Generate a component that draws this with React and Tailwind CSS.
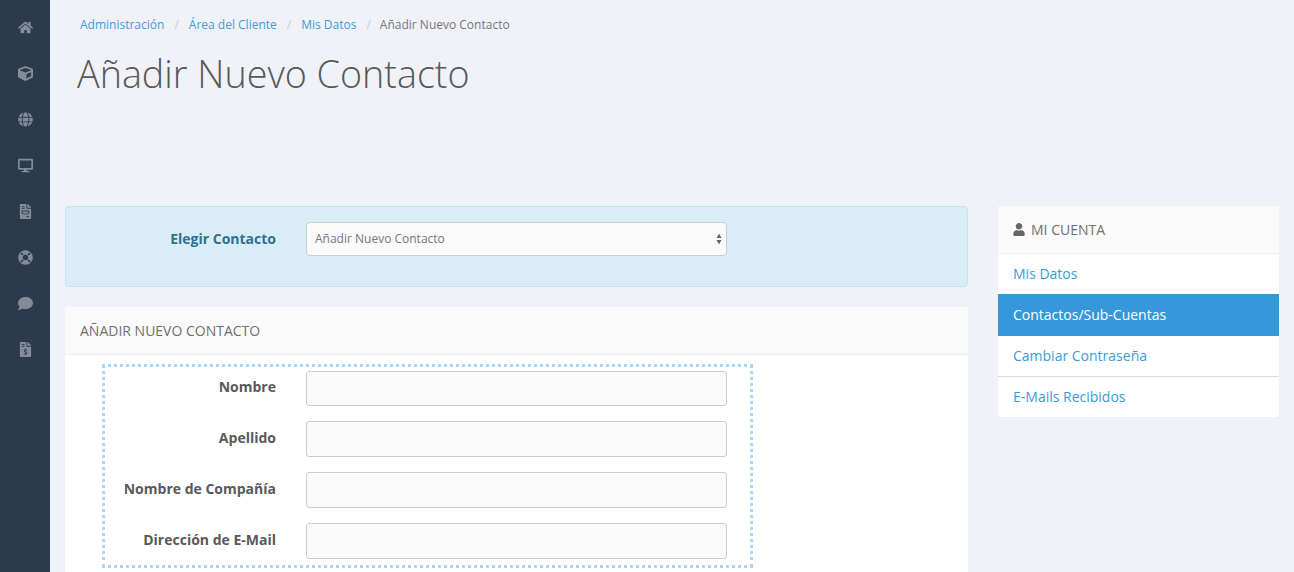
import React from "react";
import { FaHome, FaCube, FaGlobe, FaDesktop, FaFileInvoice, FaLifeRing, FaComment, FaFileInvoiceDollar, FaUser } from "react-icons/fa";

const nav = [FaHome, FaCube, FaGlobe, FaDesktop, FaFileInvoice, FaLifeRing, FaComment, FaFileInvoiceDollar];
const fields = ["Nombre", "Apellido", "Nombre de Compañía", "Dirección de E-Mail"];

export default function App() {
  return (
    <div className="flex h-[572px] w-[1294px] overflow-hidden bg-[#f0f2f7] font-['Open_Sans',sans-serif] text-[#58595b]">
      <aside className="flex w-[50px] shrink-0 flex-col items-center bg-[#2b3a4d] pt-[19px]">
        {nav.map((I, i) => (
          <div key={i} className="flex h-[46px] w-full items-start justify-center pt-px">
            <I className="h-[15px] w-[15px] text-[#848c99]" />
          </div>
        ))}
      </aside>
      <main className="flex min-w-0 flex-1 pl-[15px]">
        <div className="flex w-[903px] shrink-0 flex-col">
          <nav className="flex items-center pl-[15px] pt-[16px] text-[12px] leading-[17px]">
            <a className="text-[#3a9ee4]">Administración</a>
            <span className="px-[10px] text-[#cccccc]">/</span>
            <a className="text-[#3a9ee4]">Área del Cliente</a>
            <span className="px-[10px] text-[#cccccc]">/</span>
            <a className="text-[#3a9ee4]">Mis Datos</a>
            <span className="pl-[10px] pr-[9px] text-[#cccccc]">/</span>
            <span className="text-[#777777]">Añadir Nuevo Contacto</span>
          </nav>
          <h1 className="pl-[12px] pt-[16px] text-[37.7px] font-light leading-[50px] text-[#58595b]">Añadir Nuevo Contacto</h1>
          <div className="mt-[107px] flex h-[81px] shrink-0 items-start rounded-[4px] border border-[#bce8f1] bg-[#d9edf7] pt-[15px]">
            <label className="w-[210px] pt-[7px] text-right text-[14px] font-bold leading-[20px] text-[#31708f]">Elegir Contacto</label>
            <div className="relative ml-[30px] flex h-[34px] w-[421px] items-center rounded-[4px] border border-[#cccccc] bg-[#fafafa] pl-[8px] text-[12px] text-[#777777]">
              Añadir Nuevo Contacto
              <svg className="absolute right-[3px] top-[10px]" width="8" height="12" viewBox="0 0 8 12" fill="#666666">
                <path d="M4 0.5 L6.5 5 L1.5 5 Z" />
                <path d="M1.5 7 L6.5 7 L4 11.5 Z" />
              </svg>
            </div>
          </div>
          <section className="mt-[20px] flex-1 bg-white">
            <h3 className="h-[48px] border-b border-[#eeeeee] bg-[#fafafa] pl-[15px] pt-[14px] text-[14px] font-normal leading-[20px] text-[#707070]">AÑADIR NUEVO CONTACTO</h3>
            <div className="ml-[37px] mt-[9px] w-[651px] border-[3px] border-dotted border-[#a9d6f5] pb-[6px] pt-[4px]">
              {fields.map((f, i) => (
                <div key={f} className={`flex items-center ${i ? "mt-[15px]" : ""}`}>
                  <label className="w-[171px] pb-[4px] text-right text-[14px] font-bold text-[#58595b]">{f}</label>
                  <input className={`ml-[30px] w-[421px] rounded-[3px] border border-[#cccccc] bg-[#fafafa] ${i ? "h-[36px]" : "h-[35px]"}`} />
                </div>
              ))}
            </div>
          </section>
        </div>
        <div className="ml-[30px] mt-[206px] w-[281px] shrink-0 self-start overflow-hidden rounded-[3px] bg-white">
          <h3 className="flex h-[48px] items-center border-b border-[#eeeeee] bg-[#fafafa] pl-[15px] text-[14px] text-[#707070]">
            <FaUser className="mr-[6px] h-[13px] w-[12px] text-[#666666]" />
            MI CUENTA
          </h3>
          <a className="flex h-[40px] items-center pb-[2px] pl-[15px] text-[14px] text-[#3a9bdc]">Mis Datos</a>
          <a className="flex h-[42px] items-center bg-[#3498db] pb-[2px] pl-[15px] text-[14px] text-white">Contactos/Sub-Cuentas</a>
          <a className="flex h-[41px] items-center border-b border-[#dddddd] pb-[2px] pl-[15px] text-[14px] text-[#3a9bdc]">Cambiar Contraseña</a>
          <a className="flex h-[40px] items-center pb-[2px] pl-[15px] text-[14px] text-[#3a9bdc]">E-Mails Recibidos</a>
        </div>
      </main>
    </div>
  );
}
